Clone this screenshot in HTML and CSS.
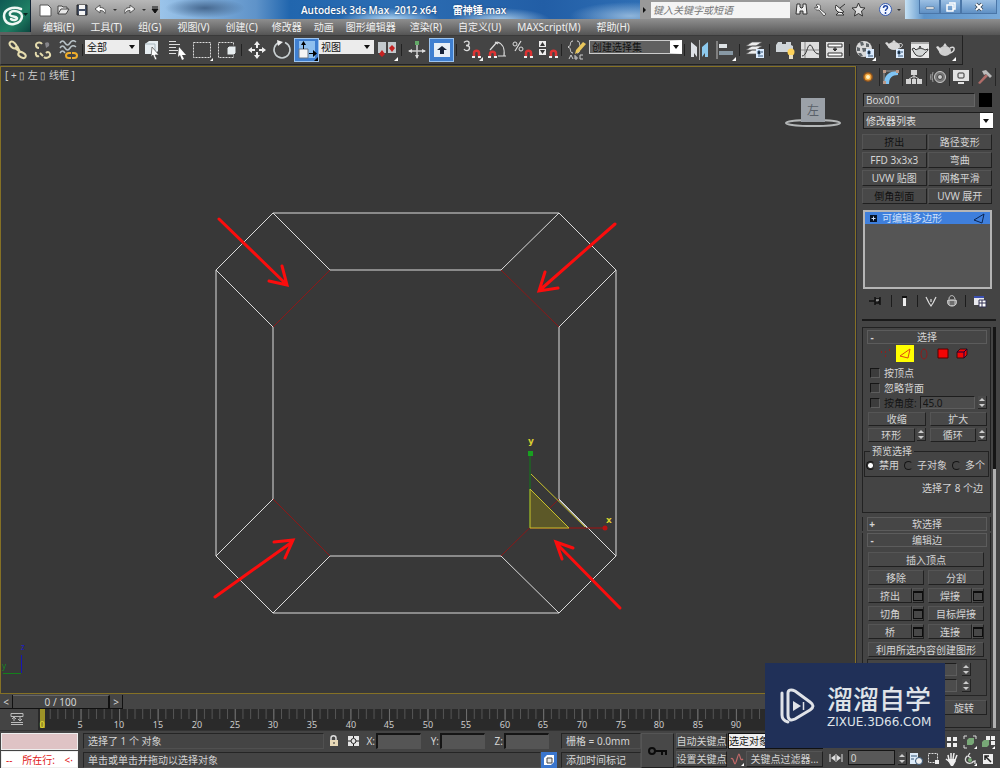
FILE: index.html
```html
<!DOCTYPE html>
<html lang="zh-CN">
<head>
<meta charset="utf-8">
<title>Autodesk 3ds Max 2012 x64</title>
<link rel="stylesheet" href="styles.css">
</head>
<body>
<header class="top">
  <button class="logo" aria-label="应用程序菜单">
    <svg width="31" height="32" viewBox="0 0 31 32"><g fill="none" stroke="#eef7f3" stroke-linecap="round"><path d="M21 9C13 6 4 9 4 16c0 6 5 9 10 8 5-1 8-4 8-8 0-3-4-5-8-5-3 0-5 2-4 4 1 2 6 1 7 3 0 2-4 3-6 1" stroke-width="2.500"/></g><path d="M23 13h5l-2.500 3z" fill="#0a2522"/></svg>
  </button>
  <div class="bars">
    <div class="title-row">
      <div class="quick">
        <button aria-label="新建"><svg width="15" height="14"><path d="M2 2h8l3 3v8H2z" fill="#fff" stroke="#555"/></svg></button>
        <button aria-label="打开"><svg width="15" height="14"><path d="M2 11V3h4l1 1h4v2M2 11l3-5h8l-3 5z" fill="#e7e7e7" stroke="#444"/></svg></button>
        <button aria-label="保存"><svg width="15" height="14"><path d="M2 2h10v10H2z" fill="#455066" stroke="#222"/><path d="M4 2h6v4H4zM4 8h6v4H4z" fill="#f5f5f5"/></svg></button>
        <button aria-label="撤消"><svg width="15" height="14"><path d="M2 6l5-4v2.500c5 0 6 3 5 6-1-2-2-3-5-3V10z" fill="#fff" stroke="#555"/></svg></button>
        <button class="drop" aria-label="撤消列表"><svg width="8" height="8"><path d="M2 3h4L4 5z" fill="#333"/></svg></button>
        <button aria-label="重做"><svg width="15" height="14"><path d="M13 6L8 2v2.500c-5 0-6 3-5 6 1-2 2-3 5-3V10z" fill="#eee" stroke="#555"/></svg></button>
        <button class="drop" aria-label="重做列表"><svg width="8" height="8"><path d="M2 3h4L4 5z" fill="#333"/></svg></button>
        <button class="drop" aria-label="自定义工具栏"><svg width="8" height="8"><path d="M1 1h6M1 3h6L4 7z" fill="#111" stroke="#111"/></svg></button>
      </div>
      <h1 class="title"><span>Autodesk 3ds Max&nbsp; 2012 x64</span><span>雷神锤.max</span></h1>
      <div class="search"><svg width="7" height="10"><path d="M2 2l3 3-3 3z" fill="#111"/></svg><input type="text" placeholder="键入关键字或短语" aria-label="搜索"></div>
      <div class="help">
        <button aria-label="查找"><svg width="15" height="15"><path d="M3 2h3v3l1 1h1l1-1V2h3l1 10H9V9H6v3H2z" fill="#eee" stroke="#333"/></svg></button>
        <button aria-label="速博应用中心"><svg width="15" height="15"><path d="M3 3c2-2 6 0 4 4l6 5-2 2-5-6C3 9 1 6 2 5l2 1 1-1z" fill="#f2f2f2" stroke="#555"/></svg></button>
        <button aria-label="通讯中心"><svg width="15" height="15"><path d="M4 3c-2 5 2 9 8 7zM7 10l-3 3h8l-3-3M8 6l5-4" fill="#eee" stroke="#333"/></svg></button>
        <button aria-label="收藏夹"><svg width="15" height="15"><path d="M7.500 1l2 4.500 4.500.5-3.500 3 1 5-4-2.500-4 2.500 1-5L1 6l4.500-.5z" fill="#ddd" stroke="#333"/></svg></button>
        <button class="help-btn" aria-label="帮助"><svg width="15" height="15"><circle cx="7.500" cy="7.500" r="6" fill="#f2f6ff" stroke="#3a5db0"/><path d="M5.500 6c0-3 4-3 4-.5 0 2-2 1.500-2 3.500M7.500 10v2" fill="none" stroke="#2346a0" stroke-width="1.500"/></svg></button>
        <button class="drop" aria-label="帮助列表"><svg width="8" height="8"><path d="M2 3h4L4 5z" fill="#333"/></svg></button>
      </div>
      <div class="window-buttons">
        <button aria-label="最小化"><svg width="14" height="12"><path d="M3 6h8v2H3z" fill="#fff" stroke="#456" stroke-width=".5"/></svg></button>
        <button aria-label="还原"><svg width="14" height="12"><path d="M5 2h6v6H9M3 4h6v6H3z" fill="none" stroke="#fff" stroke-width="1.500"/></svg></button>
        <button class="close" aria-label="关闭"><svg width="14" height="12"><path d="M4 3l6 6M10 3l-6 6" stroke="#345" stroke-width="3.500"/><path d="M4 3l6 6M10 3l-6 6" stroke="#fff" stroke-width="2"/></svg></button>
      </div>
    </div>
    <nav class="menu">
      <button>编辑(E)</button><button>工具(T)</button><button>组(G)</button><button>视图(V)</button><button>创建(C)</button><button class="plain">修改器</button><button class="plain">动画</button><button class="plain">图形编辑器</button><button>渲染(R)</button><button>自定义(U)</button><button>MAXScript(M)</button><button>帮助(H)</button>
    </nav>
  </div>
</header>

<div class="toolbar">
  <div class="tools">
    <button aria-label="选择并链接"><svg width="22" height="22"><g fill="none" stroke="#e5dcae" stroke-width="2"><ellipse cx="6" cy="6" rx="4" ry="2.500" transform="rotate(45 6 6)"/><ellipse cx="15" cy="16" rx="4" ry="2.500" transform="rotate(30 15 16)"/><path d="M8 9l5 4M10 7l3 6"/></g></svg></button>
    <button aria-label="断开链接"><svg width="22" height="22"><g fill="none" stroke="#e5dcae" stroke-width="2"><path d="M10 5c-2-3-6-1-6 1s1 3 3 3M12 18c2 2 7 0 6-3s-3-2-4-1M8 14l3 3M4 13c-1 3 1 5 3 4"/></g><path d="M13 4c3-2 5 0 4 3l-3 2z" fill="#85858a"/></svg></button>
    <button aria-label="绑定到空间扭曲"><svg width="22" height="22"><g fill="none"><path d="M3 4q2.500-4 5 0t5 0 6-1M3 9q2.500-4 5 0t5 0 6-1M3 14q2.500-4 5 0" stroke="#b9c3c8" stroke-width="1.500"/><path d="M15 14h2c4 0 4 5 0 5h-2M14 14h-2c-4 0-4 5 0 5h2" stroke="#efad2b" stroke-width="2"/></g></svg></button>
    <i class="sep"></i>
    <label class="pick filter"><select aria-label="选择过滤器"><option>全部</option></select></label>
    <button aria-label="选择对象"><svg width="22" height="22"><path d="M4 5l4-3h9v10l-3 3H4z" fill="#e6edf1"/><path d="M4 5h10v10" stroke="#a9b8bf" fill="none"/><path d="M11 8l7 8h-4l2 4-2 1-2-5-2 2z" fill="#fff" stroke="#444" stroke-width=".7"/></svg></button>
    <button aria-label="按名称选择"><svg width="22" height="22"><path d="M3 2.500h7M3 5.500h11M3 8.500h7M3 11.500h9M3 14.500h7" stroke="#ddd"/><path d="M13 8l7 8h-4l2 4-2 1-2-5-2 2z" fill="#fff"/></svg></button>
    <button aria-label="矩形选择区域"><svg width="22" height="22"><path d="M2.500 3.500h17v15h-17z" fill="none" stroke="#ddd" stroke-dasharray="2 1"/><path d="M22 19v3h-3z" fill="#fff"/></svg></button>
    <button aria-label="窗口/交叉"><svg width="22" height="22"><path d="M2.500 3.500h15v15h-15z" fill="none" stroke="#ddd" stroke-dasharray="2 1"/><path d="M11 9l2-2h7v7l-2 2h-7z" fill="#e8eef0" stroke="#444"/></svg></button>
    <i class="sep"></i>
    <button aria-label="选择并移动"><svg width="22" height="22"><path d="M11 2l3 4h-2v3h-2V6H8zM11 20l3-4h-2v-3h-2v3H8zM2 11l4-3v2h3v2H6v2zM20 11l-4-3v2h-3v2h3v2z" fill="#eee"/></svg></button>
    <button aria-label="选择并旋转"><svg width="22" height="22"><path d="M14 3.500A8 8 0 1 1 8 3.500" fill="none" stroke="#c9d0d2" stroke-width="1.500"/><path d="M6 1l6 2-5 4z" fill="#eee"/></svg></button>
    <button class="active" aria-label="选择并缩放"><svg width="22" height="22"><path d="M3 2h16v17H3z" fill="#8fc0ef"/><path d="M3 10h9v9H3z" fill="#f4f4f4" stroke="#678"/><path d="M7.500 10V5M13 14.500h5" stroke="#000"/><path d="M5 6l2.500-4L10 6zM17 11l4 3.500-4 3.500zM22 18v4h-4z" fill="#000"/></svg></button>
    <label class="pick coord"><select aria-label="参考坐标系"><option>视图</option></select></label>
    <button aria-label="使用轴点中心"><svg width="22" height="22"><path d="M2 3h8v11H2zM12 3h8v11h-8z" fill="#c3c9cd"/><path d="M3 15l3-4 3 4-3 3zM13 9l3-3 3 3-3 4z" fill="#c52222"/><path d="M22 18v4h-4z" fill="#fff"/></svg></button>
    <i class="sep"></i>
    <button aria-label="选择并操纵"><svg width="22" height="22"><path d="M11 3v16M3 12h16" stroke="#ccc" stroke-width="1.500"/><path d="M9 2h4v4H9z" fill="#62a867"/><path d="M2 12l4-2v4zM20 12l-4-2v4zM11 20l-2-4h4z" fill="#ddd"/></svg></button>
    <button class="active" aria-label="键盘快捷键覆盖切换"><svg width="22" height="22"><path d="M3 4h16v14H3z" fill="#e6eef6"/><path d="M11 7l5 4h-3v4H9v-4H6z" fill="#172338"/></svg></button>
    <i class="sep"></i>
    <button aria-label="捕捉开关"><svg width="22" height="22"><path d="M3 3.500C5 1 8.500 2 8 4.500c0 1.500-1.500 2-3 2 2 0 3.500 1 3.500 2.500C8.500 12 4.500 12.500 3 10" fill="none" stroke="#ddd" stroke-width="1.300"/><path d="M13 18v-4c0-3 5-3 5 0v4" fill="none" stroke="#d33" stroke-width="2.500"/><path d="M11 17h3v2h-3zM17 17h3v2h-3zM22 18v4h-4z" fill="#eee"/></svg></button>
    <button aria-label="角度捕捉切换"><svg width="22" height="22"><path d="M4 11l7-8M11 3c5 1 8 6 7 14M12 17h8M9 3l3 2" fill="none" stroke="#ddd" stroke-width="1.200"/><path d="M4 18v-3c0-3 5-3 5 0v3" fill="none" stroke="#d33" stroke-width="2.500"/><path d="M2 17h3v2H2zM8 17h3v2H8z" fill="#eee"/></svg></button>
    <button aria-label="百分比捕捉切换"><svg width="22" height="22"><path d="M10 2L4 12" stroke="#ddd" stroke-width="1.200"/><circle cx="4" cy="5" r="2" fill="none" stroke="#ddd"/><circle cx="10" cy="10" r="2" fill="none" stroke="#ddd"/><path d="M15 18v-4c0-3 5-3 5 0v4" fill="none" stroke="#d33" stroke-width="2.500"/><path d="M13 17h3v2h-3zM19 17h3v2h-3z" fill="#eee"/></svg></button>
    <button aria-label="微调器捕捉切换"><svg width="22" height="22"><path d="M3 2h7v6H3zM3 10h7v6H3z" fill="#eee"/><path d="M4 7l2.500-4L9 7zM4 11l2.500 4L9 11z" fill="#333"/><path d="M15 18v-4c0-3 5-3 5 0v4" fill="none" stroke="#d33" stroke-width="2.500"/><path d="M13 17h3v2h-3zM19 17h3v2h-3z" fill="#eee"/></svg></button>
    <i class="sep"></i>
    <button aria-label="编辑命名选择集"><svg width="22" height="22"><path d="M7 2C3 2 6 7 2 8c4 1 1 6 5 6M11 2c4 0 1 5 5 6-4 1-1 6-5 6" fill="none" stroke="#ddd"/><path d="M17 3l3 2-7 8-4 2 1-4z" fill="#eac75b"/><path d="M3 20l2-4 2 4M9 16v4h2v-2H9M17 16h-3v4h3" fill="none" stroke="#ccc"/></svg></button>
    <label class="pick sets"><select aria-label="命名选择集"><option>创建选择集</option></select></label>
    <i class="sep"></i>
    <button aria-label="镜像"><svg width="22" height="22"><path d="M2 3l6 5v10l-3-4v4H2z" fill="#dde1e6"/><path d="M10.500 1v20" stroke="#aaa"/><path d="M19 3l-6 5v10l3-4v4h3z" fill="#8cc9ed"/></svg></button>
    <button aria-label="对齐"><svg width="22" height="22"><path d="M3 2v18" stroke="#bbb"/><path d="M5 5h8v4H5z" fill="#dde2e5"/><path d="M5 12h14v4H5z" fill="#8899a5"/><path d="M22 18v4h-4z" fill="#fff"/></svg></button>
    <i class="sep"></i>
    <button aria-label="层管理器"><svg width="22" height="22"><path d="M2 7l6-4h10l-6 4zM2 11l6-4h10l-6 4zM2 15l6-4h10l-6 4z" fill="#eee" stroke="#555" stroke-width=".7"/><path d="M12 10h8v9h-8z" fill="#dcecff"/><path d="M14 12h2v3h-2zM17 13h2M14 17h5" stroke="#357"/></svg></button>
    <i class="sep"></i>
    <button aria-label="石墨建模工具"><svg width="22" height="22"><path d="M2 6l2-3h4v2h4V3h5v3l2 1v6H2z" fill="#cfd5d9"/><circle cx="17" cy="13" r="3.500" fill="#ffd35a"/><path d="M15 16h4v4h-4z" fill="#e9dfc3"/></svg></button>
    <button aria-label="曲线编辑器"><svg width="22" height="22"><path d="M2 3h18v16H2z" fill="#dedede"/><path d="M6 3v16M2 11h18" stroke="#888"/><path d="M3 17C8 17 8 6 11 6s3 9 9 9" fill="none" stroke="#333"/></svg></button>
    <button aria-label="图解视图"><svg width="22" height="22"><path d="M2 3h18v16H2z" fill="#dedede"/><path d="M4 5h14v3H4zM4 14h14v3H4z" fill="#fff" stroke="#333"/><path d="M11 8v3M9 10h4l-2 2z" stroke="#333" fill="#333"/></svg></button>
    <i class="sep"></i>
    <button aria-label="材质编辑器"><svg width="22" height="22"><circle cx="10" cy="10" r="8" fill="#d9d9d9"/><path d="M6 3l3 0 1 3-3 1zM12 4l3 1 0 3-3 0zM3 8l3 1 0 3-3 0zM8 9l4 0 1 3-4 1zM4 14l3 0 2 3-3 0z" fill="#60666a"/><path d="M12 10h8v9h-8z" fill="#dcecff"/><path d="M14 12h2v3h-2zM14 17h5" stroke="#357"/><path d="M22 18v4h-4z" fill="#fff"/></svg></button>
    <i class="sep"></i>
    <button aria-label="渲染设置"><svg width="22" height="22"><ellipse cx="10" cy="7" rx="6" ry="4" fill="#d8d8d8"/><path d="M5 9L1 4l2-1 4 4zM8 3l2-2 2 2z" fill="#d8d8d8"/><path d="M15 5c4-2 5 3 0 4" fill="none" stroke="#d8d8d8"/><path d="M12 10h8v9h-8z" fill="#dcecff"/><path d="M14 12h2v3h-2zM17 13h2M14 17h5" stroke="#357"/></svg></button>
    <button aria-label="渲染帧窗口"><svg width="22" height="22"><path d="M2 3h18v16H2z" fill="#e8e8e8"/><path d="M2 4h18" stroke="#aaa" stroke-width="2"/><path d="M6 15L3 10l2-1 2 2c2-2 7-2 9 0l3-1c0 3-3 3-4 5-1 3-7 3-9 0zM10 9l1-2 1 2" fill="#d4d7d7" stroke="#333"/></svg></button>
    <button aria-label="渲染产品"><svg width="22" height="22"><ellipse cx="11" cy="12" rx="6" ry="5" fill="#cfcfcf"/><path d="M6 14L2 8l2-1 4 4zM9 7l2-3 2 3z" fill="#d8d8d8"/><path d="M16 9c5-3 6 3 0 5" fill="none" stroke="#d8d8d8" stroke-width="1.500"/><path d="M22 18v4h-4z" fill="#fff"/></svg></button>
  </div>
</div>

<main class="work">
  <section class="stage">
    <div class="viewport">
      <svg class="scene" viewBox="0 66 856 628" preserveAspectRatio="xMidYMid meet">
        <g class="mesh">
          <path d="M273 213H559L616 270V556L559 613H273L216 556V270z"/>
          <path d="M330 270H501M559 327V499M501 556H330M273 499V327"/>
          <path d="M273 213l57 57M559 213l-58 57M616 270l-57 57M616 556l-57-57M559 613l-58-57M273 613l57-57M216 556l57-57M216 270l57 57"/>
        </g>
        <path class="picked" d="M330 270l-57 57M501 270l58 57M273 499l57 57M501 556l58-57"/>
        <g class="gizmo">
          <path d="M530 528V454" stroke="#117a18"/><path d="M528 451h5v5h-5z" fill="#18a020"/>
          <path d="M530 528h76" stroke="#a01010"/><circle cx="605" cy="528" r="2.500" fill="#b81212"/>
          <path d="M530 489v39h39z" fill="#5c5828" stroke="#c9c12c"/>
          <path d="M531 474l54 53" stroke="#c9c12c"/><path d="M559 500l28 28" stroke="#aaa"/>
          <text x="528" y="444">y</text><text x="606" y="523">x</text>
        </g>
        <g class="arrows">
          <path d="M219 219L286 284M269 281l18 4-5-19"/>
          <path d="M615 224L540 290M545 272l-6 19 19-3"/>
          <path d="M215 597L292 542M274 542l19-2-8 18"/>
          <path d="M620 608L557 544M562 559l-6-17 17 6"/>
        </g>
        <g class="cube"><ellipse cx="813" cy="123" rx="27" ry="3" fill="none" stroke="#b4b7b8" stroke-width="2"/><path d="M801 98h24v24h-24z" fill="#9ba1a8"/><text x="807" y="115">左</text></g>
        <path d="M21.500 673V655" stroke="#1616b4"/><path d="M3 673.500h18" stroke="#14801c"/>
        <g class="axis"><text x="21" y="650" fill="#1c1ccc">z</text><text x="2" y="669" fill="#168a20">y</text></g>
      </svg>
      <span class="view-label">[ + ▯ 左 ▯ 线框 ]</span>
    </div>
    <div class="slider"><button aria-label="上一帧">&lt;</button><button class="thumb">0 / 100</button><button aria-label="下一帧">&gt;</button></div>
    <div class="track">
      <button class="mini-curve" aria-label="打开迷你曲线编辑器"><svg width="16" height="15"><path d="M2 1.500h12v3H2zM2 12.500h12M2 10.500h12M5 5v4M11 5v4M3 7l2-2 2 2M9 7l2 2 2-2" fill="none" stroke="#bbb"/></svg></button>
      <div class="ruler">
        <svg width="817" height="21">
          <defs><pattern id="minor" x="4" width="7.710" height="21" patternUnits="userSpaceOnUse"><path d="M.5 0v10" stroke="#555"/></pattern><pattern id="major" x="4" width="38.550" height="21" patternUnits="userSpaceOnUse"><path d="M.5 0v13" stroke="#6c6c6c"/></pattern></defs>
          <path d="M4 0h775v21H4z" fill="url(#minor)"/><path d="M4 0h775v21H4z" fill="url(#major)"/>
          <path d="M2 0h5v19H2z" fill="#9c9227"/>
          <g class="nums"><text x="4" y="19" class="now">0</text><text x="42" y="19">5</text><text x="81" y="19">10</text><text x="120" y="19">15</text><text x="159" y="19">20</text><text x="197" y="19">25</text><text x="235" y="19">30</text><text x="274" y="19">35</text><text x="313" y="19">40</text><text x="351" y="19">45</text><text x="390" y="19">50</text><text x="428" y="19">55</text><text x="467" y="19">60</text><text x="505" y="19">65</text><text x="544" y="19">70</text><text x="583" y="19">75</text><text x="621" y="19">80</text><text x="660" y="19">85</text><text x="698" y="19">90</text></g>
        </svg>
      </div>
    </div>
  </section>

  <aside class="panel">
    <div class="tabs">
      <button aria-label="创建"><svg width="18" height="16"><circle cx="9" cy="8" r="5" fill="#8a5220"/><circle cx="9" cy="8" r="3.500" fill="#f2a63c"/><circle cx="9" cy="8" r="2" fill="#fff3c0"/></svg></button>
      <button class="on" aria-label="修改"><svg width="18" height="16"><path d="M2 15C2 6 7 2 16 2v4C10 6 7 9 7 15z" fill="#7fc4f4"/><path d="M2 14V2h13" fill="none" stroke="#999"/><path d="M1 1h3v3H1zM14 1h3v3h-3zM1 12h3v3H1z" fill="#b98"/></svg></button>
      <button aria-label="层次"><svg width="18" height="16"><path d="M6 1h6v5H6zM1 10h5v5H1zM7 10h4v5H7zM12 10h5v5h-5z" fill="#d4d4d4"/><path d="M9 6v4M4 10l5-3 5 3" fill="none" stroke="#ccc"/></svg></button>
      <button aria-label="运动"><svg width="18" height="16"><circle cx="11" cy="8" r="5.500" fill="#777" stroke="#ccc"/><circle cx="11" cy="8" r="2.500" fill="#ccc" stroke="#444"/><path d="M4 3q-2 5 0 10M2 5q-1 3 0 6" fill="none" stroke="#999"/></svg></button>
      <button aria-label="显示"><svg width="18" height="16"><path d="M1 1h16v11H1zM6 13h6v2H6z" fill="#e2e2e2"/><rect x="6" y="4" width="6" height="5" rx="1" fill="none" stroke="#333"/></svg></button>
      <button aria-label="工具"><svg width="18" height="16"><path d="M3 14l8-9 2 2-8 8z" fill="#b06c68"/><path d="M7 2l4-1 6 6-2 2-4-4-2 1z" fill="#bbb"/></svg></button>
    </div>
    <div class="name-row"><input type="text" value="Box001" aria-label="对象名称"><button class="swatch" aria-label="对象颜色"></button></div>
    <label class="pick modlist"><select aria-label="修改器列表"><option>修改器列表</option></select></label>
    <div class="mod-buttons">
      <button disabled>挤出</button><button>路径变形</button>
      <button>FFD 3x3x3</button><button>弯曲</button>
      <button>UVW 贴图</button><button>网格平滑</button>
      <button disabled>倒角剖面</button><button>UVW 展开</button>
    </div>
    <div class="stack">
      <button class="stack-item"><svg width="9" height="9"><path d="M1 1h7v7H1z" fill="#061226"/><path d="M2.500 4.500h4M4.500 2.500v4" stroke="#c7dcfa"/></svg><span>可编辑多边形</span><svg width="13" height="11"><path d="M1 7l10-6-2 9z" fill="none" stroke="#0b2552"/></svg></button>
    </div>
    <div class="stack-tools">
      <button aria-label="锁定堆栈"><svg width="16" height="14"><path d="M1 7h6M7 3v8M7 5h4v4H7M12 3v8" fill="none" stroke="#111" stroke-width="1.500"/><path d="M8 6h3" stroke="#ddd"/></svg></button><i></i>
      <button aria-label="显示最终结果"><svg width="12" height="14"><path d="M4 2h5v2H4z" fill="#111"/><path d="M5 4h3v8H5z" fill="#eee"/></svg></button><i></i>
      <button aria-label="使唯一"><svg width="14" height="14"><path d="M2 3l3 6M12 3L9 9M7 5v3M5 9l2 3 2-3" fill="none" stroke="#ddd" stroke-width="1.200"/></svg></button>
      <button aria-label="移除修改器"><svg width="14" height="14"><path d="M4 5c0-4 5-5 6 0" fill="none" stroke="#ccc"/><path d="M3 6h8c1 3 0 6-4 6s-5-3-4-6z" fill="#999" stroke="#ddd"/><path d="M5 8h4M5 10h4" stroke="#444"/></svg></button><i></i>
      <button aria-label="配置修改器集"><svg width="14" height="14"><path d="M1 2h10v9H1z" fill="#e9e9ee"/><path d="M1 2h10v2H1z" fill="#3a4fb0"/><path d="M6 6h7v7H6z" fill="#fff" stroke="#335"/><path d="M6 9h7M9 6v7" stroke="#335"/></svg></button>
    </div>
    <div class="rollouts">
      <div class="roll-col">
        <section class="roll select-roll">
          <button class="roll-head"><b>-</b><span>选择</span></button>
          <div class="sub">
            <button aria-label="顶点"><svg width="18" height="17"><path d="M4 7h1M8 11h1M12 5h1M8 7h1" stroke="#a11" stroke-width="1.500"/></svg></button>
            <button class="cur" aria-label="边"><svg width="18" height="17"><path d="M4 11l10-7-2 9z" fill="none" stroke="#e04a10"/></svg></button>
            <button aria-label="边界"><svg width="18" height="17"><ellipse cx="9" cy="9" rx="3" ry="5" fill="none" stroke="#8c1c1c"/></svg></button>
            <button aria-label="多边形"><svg width="18" height="17"><path d="M4 4h10v9H4z" fill="#f20505" stroke="#500"/></svg></button>
            <button aria-label="元素"><svg width="18" height="17"><path d="M4 7l3-3h7v6l-3 3H4z" fill="#f20505" stroke="#311"/><path d="M4 7h7v6M11 7l3-3" fill="none" stroke="#104"/></svg></button>
          </div>
          <label class="check"><input type="checkbox">按顶点</label>
          <label class="check"><input type="checkbox">忽略背面</label>
          <div class="angle"><label class="check off"><input type="checkbox" disabled>按角度:</label><input class="num" type="text" value="45.0" disabled aria-label="角度"><span class="spin"></span></div>
          <div class="two"><button>收缩</button><button>扩大</button></div>
          <div class="two"><div class="with"><button>环形</button><span class="spin"></span></div><div class="with"><button>循环</button><span class="spin"></span></div></div>
          <fieldset><legend>预览选择</legend>
            <label><input type="radio" name="preview" checked>禁用</label><label><input type="radio" name="preview">子对象</label><label><input type="radio" name="preview">多个</label>
          </fieldset>
          <p class="count">选择了 8 个边</p>
        </section>
        <section class="roll soft"><button class="roll-head"><b>+</b><span>软选择</span></button></section>
        <section class="roll edges">
          <button class="roll-head"><b>-</b><span>编辑边</span></button>
          <div class="edge-grid">
            <button class="full">插入顶点</button>
            <button>移除</button><button>分割</button>
            <div class="with"><button>挤出</button><button class="opt" aria-label="挤出设置"></button></div><div class="with"><button>焊接</button><button class="opt" aria-label="焊接设置"></button></div>
            <div class="with"><button>切角</button><button class="opt" aria-label="切角设置"></button></div><button>目标焊接</button>
            <div class="with"><button>桥</button><button class="opt" aria-label="桥设置"></button></div><div class="with"><button>连接</button><button class="opt" aria-label="连接设置"></button></div>
            <button class="full">利用所选内容创建图形</button>
          </div>
          <div class="weights"><div><input class="num" type="text" aria-label="权重"><span class="spin"></span></div><div><input class="num" type="text" aria-label="折缝"><span class="spin"></span></div></div>
          <div class="turn"><button>旋转</button></div>
        </section>
      </div>
      <div class="scroll"><i></i></div>
    </div>
  </aside>
</main>

<footer class="status">
  <div class="listener"><div class="pink"></div><div class="line"><span>--</span><span>所在行:</span><span>&lt;·</span></div></div>
  <div class="info">
    <div class="row">
      <div class="well grow">选择了 1 个 对象</div>
      <button class="lock" aria-label="选择锁定"><svg width="12" height="14"><path d="M3 7V4c0-3 5-3 5 0v3" fill="none" stroke="#ddd" stroke-width="1.500"/><path d="M2 6h8v6H2z" fill="#e8d9b8"/><path d="M6 8v2" stroke="#333"/></svg></button>
      <button class="abs" aria-label="绝对模式"><svg width="12" height="12"><path d="M0 1h11v10H0z" fill="#e6e6e6"/><circle cx="5.500" cy="6" r="2.500" fill="none" stroke="#222"/><path d="M5.500 1v2M5.500 9v2M0 6h3M8 6h3" stroke="#222"/></svg></button>
      <label class="xyz">X:<input type="text"></label><label class="xyz">Y:<input type="text"></label><label class="xyz">Z:<input type="text"></label>
      <div class="well tag">栅格 = 0.0mm</div>
    </div>
    <div class="row">
      <div class="well grow">单击或单击并拖动以选择对象</div>
      <button class="adapt" aria-label="自适应降级"><svg width="16" height="16"><path d="M3 6l3-3h7v7l-3 3H3z" fill="#fff"/><path d="M6 6h5v5H6z" fill="#e8e8e8" stroke="#444"/></svg></button>
      <div class="well tag">添加时间标记</div>
    </div>
  </div>
  <button class="key" aria-label="设置关键点"><svg width="22" height="12"><circle cx="5" cy="6" r="3" fill="none" stroke="#0b0b0b" stroke-width="2"/><path d="M8 5h12v5h-2V7h-2v3h-2V7H8z" fill="#0b0b0b"/></svg></button>
  <div class="keys">
    <button>自动关键点</button><label class="keysel"><select aria-label="关键点集"><option>选定对象</option></select></label>
    <button>设置关键点</button><div class="filters"><button class="tangent" aria-label="新建关键点切线"><svg width="16" height="16"><path d="M2 8c2-3 3 5 4 5S9 3 10 3s1 8 4 5" fill="none" stroke="#c26a6a" stroke-width="1.200"/><path d="M15 12v3h-3z" fill="#fff"/></svg></button><button>关键点过滤器...</button></div>
  </div>
  <div class="play">
    <button aria-label="关键点模式"><svg width="14" height="12"><path d="M1 2v8M13 2v8M7 2v8" stroke="#ddd"/><path d="M6 3v6L2 6zM8 3v6l4-3z" fill="#ddd"/></svg></button><input type="text" value="0" aria-label="当前帧"><span class="spin"></span>
  </div>
  <div class="nav">
    <i></i><i></i>
    <button aria-label="缩放所有视图"><svg width="14" height="14"><path d="M2 2h4v4H2zM8 2h4v4H8zM2 8h4v4H2zM8 8h4v4H8z" fill="#eee"/></svg></button>
    <button aria-label="最大化显示"><svg width="14" height="14"><path d="M1 4V1h3M10 1h3v3M1 10v3h3" fill="none" stroke="#ddd"/><path d="M4 5l2-2h5v5l-2 2H4z" fill="#78a877"/><path d="M14 11v3h-3z" fill="#fff"/></svg></button>
    <button aria-label="所有视图最大化"><svg width="14" height="14"><path d="M5 1h4v4H5zM10 1h4v4h-4zM10 6h4v4h-4z" fill="#eee"/><path d="M1 7l2-2h5v5l-2 2H1z" fill="#78a877"/><path d="M14 11v3h-3z" fill="#fff"/></svg></button>
    <button aria-label="时间配置"><svg width="14" height="14"><path d="M1 1h8v11H1z" fill="#dbeaf8"/><path d="M2 4h6M2 7h3" stroke="#357"/><circle cx="10" cy="9" r="3.500" fill="#eee" stroke="#357"/></svg></button>
    <button aria-label="缩放区域"><svg width="14" height="14"><path d="M1.500 1.500h9v9h-9z" fill="none" stroke="#ddd" stroke-dasharray="2 1"/><path d="M8 8h4v4H8z" fill="#eee"/></svg></button>
    <button aria-label="平移视图"><svg width="14" height="14"><path d="M4 8L3 3M6 7V1M8 7l1-6M10 8l2-5M5 10L1 7" stroke="#eee" stroke-width="1.500"/><path d="M4 7h6l1 2-3 5H6L3 9z" fill="#eee"/></svg></button>
    <button aria-label="环绕"><svg width="14" height="14"><path d="M7 1L5 4l3 2M4 4c-5 6 3 10 7 5M9 10l3-1v3" fill="none" stroke="#ddd" stroke-width="1.300"/><circle cx="7" cy="8" r="2" fill="#78a877"/><path d="M14 11v3h-3z" fill="#fff"/></svg></button>
    <button aria-label="最大化视口切换"><svg width="14" height="14"><path d="M2 2h10v10H2z" fill="#eee"/><path d="M4 8V4h4M4 4l6 6" fill="none" stroke="#222" stroke-width="1.500"/></svg></button>
  </div>
</footer>

<div class="watermark">
  <svg width="36" height="38" viewBox="0 0 36 38"><g fill="none" stroke="#e0e3e8" stroke-width="3" stroke-linecap="round" stroke-linejoin="round"><path d="M9 6v22c0 5 3 6 7 4l15-9c4-3 4-5 0-8L16 4c-4-2-7-1-7 2"/><path d="M3 6v22c0 4 2 6 6 7"/></g><path d="M14 14l8 5-8 5z" fill="#e0e3e8"/><path d="M24.500 15v8" stroke="#e0e3e8" stroke-width="1.500"/></svg>
  <div><strong>溜溜自学</strong><span>ZIXUE.3D66.COM</span></div>
</div>
</body>
</html>
```
FILE: styles.css
```css
* { box-sizing: border-box; }
body {
  margin: 0; min-height: 100vh; display: flex; flex-direction: column;
  background: #444; color: #d4d4d4; overflow: hidden; position: relative;
  font: 10px/12px "Noto Sans", "Noto Sans CJK SC", sans-serif;
}
button, input, select { font: inherit; color: inherit; margin: 0; padding: 0; border: 0; border-radius: 0; background: none; min-width: 0; }
button { display: flex; align-items: center; justify-content: center; white-space: nowrap; }
svg { display: block; flex: none; }

/* title and menus */
.top { display: flex; height: 35px; background: #606060; }
.logo { width: 31px; height: 32px; background: linear-gradient(135deg, #0f5a54, #1f8064 60%, #0c4740); border-right: 1px solid #123; }
.bars { flex: 1; min-width: 0; }
.title-row { display: flex; height: 19px; background: #6f9ccc; }
.quick { display: flex; align-items: center; width: 129px; padding-left: 5px; background: linear-gradient(#b8b8b8, #8d8d8d); }
.quick button { width: 19px; }
.quick .drop { width: 11px; }
.title {
  flex: 1; margin: 0; display: flex; gap: 16px; padding-left: 141px; align-items: center; white-space: nowrap;
  font: 600 10px/12px "Open Sans", "Noto Sans CJK SC", sans-serif; color: #fff; text-shadow: 0 0 2px #1c3d68;
  background:
    radial-gradient(ellipse 50px 12px at 230px 20px, #b4d8f4 0, #b4d8f400 100%),
    radial-gradient(ellipse 40px 10px at 45px 8px, #46688f 0, #46688f00 100%),
    radial-gradient(ellipse 50px 12px at 340px 20px, #a9cbe8 0, #a9cbe800 100%),
    radial-gradient(ellipse 60px 14px at 470px 16px, #8fb5da 0, #8fb5da00 100%),
    linear-gradient(90deg, #9bc4ea 0, #5f93c9 20%, #2166ae 27%, #2c6db3 50%, #225ea6 80%, #2e6eb4);
}
.search { display: flex; align-items: center; width: 150px; padding-left: 1px; background: #999; }
.search input { flex: 1; width: 0; height: 16px; margin-left: 3px; padding: 0 2px; background: #f4f4f4; color: #555; font-style: italic; }
.search input::placeholder { color: #777; opacity: 1; }
.help { display: flex; align-items: center; width: 115px; padding-left: 2px; background: linear-gradient(#b5b5b5, #8b8b8b); }
.help button { width: 19px; }
.help .help-btn { margin-left: 8px; }
.help .drop { width: 8px; }
.window-buttons { display: flex; align-items: flex-start; width: 95px; padding-left: 14px; background: linear-gradient(90deg, #c6e2f5, #5c93c9 20%, #79aada); }
.window-buttons button { width: 21px; height: 14px; border: 1px solid #4a76a8; border-top: 0; background: linear-gradient(#9cc0e4, #5f90c4); }
.window-buttons .close { width: 36px; }
.menu { display: flex; height: 16px; padding-left: 4px; background: linear-gradient(#8e8e8e, #555); color: #f0f0f0; }
.menu button { padding: 0 8px; }
.menu .plain { padding: 0 6px; }

/* main toolbar */
.toolbar { display: flex; height: 31px; background: #444; }
.tools { display: flex; align-items: center; height: 30px; padding: 0 5px 0 4px; border: 1px solid #222; border-top-color: #3a3a3a; border-left-color: #555; }
.tools button { width: 25px; height: 24px; }
.tools .active { background: #3f7fd0; border: 1px solid #9cc4f0; }
.sep { width: 5px; height: 12px; border-left: 1px solid #222; margin-left: 2px; margin-right: -2px; }
.pick { position: relative; display: block; height: 14px; margin-bottom: 6px; background: #ececec; color: #111; }
.pick select { appearance: none; width: 100%; height: 100%; padding: 0 2px; display: block; }
.pick::after { content: ""; position: absolute; right: 4px; top: calc(50% - 2px); border: 3px solid transparent; border-top: 4px solid #111; border-bottom: 0; pointer-events: none; }
.filter { width: 54px; }
.coord { width: 55px; }
.sets { width: 93px; background: #606060; border: 1px solid #ccc; border-right: 12px solid #fff; }
.sets::after { right: -9px; }

/* viewport and time line */
.work { flex: 1; display: flex; min-height: 0; }
.stage { flex: 1; min-width: 0; display: flex; flex-direction: column; }
.viewport { flex: 1; min-height: 0; position: relative; background: #383838; box-shadow: inset 0 0 0 1px #857125; }
.scene { width: 100%; height: 100%; }
.view-label { position: absolute; left: 5px; top: 3px; color: #d0d0d0; }
.mesh path { fill: none; stroke: #dcdcdc; }
.picked { fill: none; stroke: #8c1818; }
.gizmo { fill: none; }
.gizmo text { fill: #d8cf30; font: 700 9px "DejaVu Sans", sans-serif; }
.arrows path { fill: none; stroke: #fb0d0d; stroke-width: 3; stroke-linecap: round; }
.cube text { fill: #596069; font-size: 12px; }
.axis text { font-size: 8px; }
.slider { display: flex; height: 15px; padding-top: 1px; background: #454545; }
.slider button { width: 13px; border-right: 1px solid #111; border-bottom: 1px solid #111; }
.slider .thumb { width: 97px; border-top: 1px solid #666; border-right-width: 2px; }
.track { display: flex; height: 21px; background: #444; }
.mini-curve { width: 38px; padding-right: 5px; }
.ruler { flex: 1; min-width: 0; overflow: hidden; background: #2a2a2a; }
.nums text { fill: #ccc; text-anchor: middle; font-size: 9px; }
.nums .now { fill: #e7dc35; }

/* command panel */
.panel { width: 144px; padding: 2px 4px 0 6px; display: flex; flex-direction: column; border-left: 1px solid #2c2c38; }
.tabs { display: flex; height: 18px; margin: 0 0 0 -6px; }
.tabs button { flex: 1; border-right: 1px solid #252525; }
.name-row { display: flex; gap: 4px; margin-top: 7px; padding-right: 4px; }
.name-row input { flex: 1; width: 0; height: 14px; padding: 0 2px; background: #555; border: 1px solid #1c1c1c; border-right-color: #666; border-bottom-color: #666; }
.swatch { width: 13px; height: 14px; background: #000; }
.modlist { height: 17px; margin: 5px 3px 0 0; background: #555; color: #ddd; border: 1px solid #1c1c1c; border-right: 0; }
.modlist::before { content: ""; position: absolute; right: 0; top: 0; width: 13px; height: 15px; background: #fff; pointer-events: none; }
.mod-buttons { display: grid; grid-template-columns: 1fr 1fr; grid-auto-rows: 16px; gap: 2px 1px; margin: 5px 4px 0 -1px; }
.mod-buttons button, .two button, .edge-grid button, .turn button, .keys button, .play > button, .key {
  background: #484848; border: 1px solid #555; border-right-color: #202020; border-bottom-color: #202020;
}
button:disabled { color: #111; }
.stack { height: 79px; margin: 6px 4px 0 0; background: #555; border: 2px solid #b5b5b5; }
.stack-item { width: 100%; height: 12px; padding: 0 4px; gap: 4px; background: #3f7fdc; color: #cde0fb; }
.stack-item span { flex: 1; text-align: left; }
.stack-tools { display: flex; align-items: center; justify-content: space-between; height: 14px; margin: 5px 9px 0 5px; }
.stack-tools i { width: 1px; height: 12px; background: #1c1c1c; }
.rollouts { flex: 1; min-height: 0; display: flex; gap: 2px; margin: 11px 0 2px -1px; padding-top: 6px; border-top: 2px solid #1a1a1a; }
.roll-col { flex: 1; min-width: 0; display: flex; flex-direction: column; }
.scroll { width: 3px; padding-top: 142px; background: #151515; display: flex; }
.scroll i { flex: 1; background: #b0b0b0; }
.roll { border: 1px solid #222; padding: 2px 3px 0 4px; }
.roll-head { width: 100%; height: 14px; border: 1px solid #5c5c5c; background: #464646; }
.roll-head b { width: 8px; }
.roll-head span { flex: 1; padding-right: 8px; }
.select-roll { height: 186px; }
.sub { display: flex; gap: 1px; margin: 1px 0 3px 10px; }
.sub .cur { background: #ffff00; }
.check { display: flex; align-items: center; gap: 4px; height: 15px; padding-left: 3px; white-space: nowrap; }
.off { color: #151515; }
input[type=checkbox] { appearance: none; width: 10px; height: 10px; background: #3c3c3c; border: 1px solid #151515; border-right-color: #5d5d5d; border-bottom-color: #5d5d5d; }
.angle { display: flex; align-items: center; gap: 3px; }
.num { height: 13px; width: 54px; padding: 0 2px; color: #151515; background: #4c4c4c; border: 1px solid #1d1d1d; border-right-color: #5d5d5d; border-bottom-color: #5d5d5d; }
.angle .num { flex: 1; width: 0; }
.spin { position: relative; width: 9px; height: 13px; flex: none; background: #4a4a4a; border-right: 1px solid #222; border-bottom: 1px solid #222; }
.spin::before, .spin::after { content: ""; position: absolute; left: 1px; border: 3px solid transparent; }
.spin::before { top: 2px; border-bottom: 3px solid #ccc; border-top: 0; }
.spin::after { bottom: 1px; border-top: 3px solid #ccc; border-bottom: 0; }
.two { display: grid; grid-template-columns: 1fr 1fr; gap: 4px; margin: 2px 0 2px 1px; }
.two button { height: 14px; }
.with { display: flex; gap: 2px; }
.with button { flex: 1; }
fieldset { display: flex; justify-content: space-between; min-width: 0; height: 32px; margin: 3px -2px 0 -3px; padding: 1px 3px 0 1px; border: 1px solid #222; }
legend { margin-left: 4px; padding: 0 2px; line-height: 12px; height: 12px; }
fieldset label { display: flex; align-items: center; gap: 4px; height: 14px; white-space: nowrap; }
input[type=radio] { appearance: none; width: 9px; height: 9px; border: 1px solid #151515; border-right-color: #444; border-radius: 50%; }
input[type=radio]:checked { background: radial-gradient(circle, #fff 2px, #333 3px); }
.count { margin: 5px 4px 0; text-align: right; }
.soft { border-top: 0; border-bottom: 0; padding-top: 0; margin-top: 4px; }
.edges { flex: 1; padding-top: 0; margin-top: 2px; border-top: 0; }
.edge-grid { display: grid; grid-template-columns: 1fr 1fr; grid-auto-rows: 15px; gap: 3px 4px; margin: 5px 3px 0 1px; }
.edge-grid .full { grid-column: 1 / 3; }
.edge-grid .with { gap: 0; }
.edge-grid .opt { flex: none; width: 12px; }
.opt::before { content: ""; width: 8px; height: 7px; border: 1px solid #0d0d0d; border-top-width: 2px; }
.weights { display: grid; justify-items: end; align-content: start; gap: 3px; height: 37px; margin: 2px 0 0; padding: 3px 15px 0 0; border: 1px solid #252525; }
.weights div { display: flex; gap: 5px; }
.turn { display: flex; justify-content: flex-end; margin: 4px 0 0; }
.turn button { width: 46px; height: 15px; }

/* status bar */
.status { display: flex; height: 38px; padding-top: 2px; background: #444; border-top: 1px solid #333; }
.listener { width: 77px; margin-left: 1px; display: flex; flex-direction: column; gap: 1px; }
.listener > div { flex: 1; border: 1px solid #eee; }
.pink { background: #dfc3c5; }
.line { display: flex; justify-content: space-between; align-items: center; padding: 0 4px; background: #fff; color: #e01818; }
.info { flex: 1; min-width: 0; display: flex; flex-direction: column; gap: 3px; margin-left: 5px; }
.row { display: flex; height: 16px; align-items: center; }
.well { height: 16px; padding: 1px 4px; border: 1px solid #252525; border-right-color: #505050; border-bottom-color: #505050; white-space: nowrap; overflow: hidden; }
.grow { flex: 1; min-width: 0; }
.tag { width: 80px; margin-left: 4px; }
.lock, .abs { width: 20px; }
.xyz { display: flex; align-items: center; justify-content: flex-end; width: 64px; gap: 1px; }
.row .xyz:first-of-type { width: 57px; }
.xyz input { width: 45px; height: 16px; background: #555; border: 2px solid #151515; border-right: 1px solid #555; border-bottom: 1px solid #555; }
.row .xyz + .tag { margin-left: 12px; }
.adapt { width: 16px; height: 16px; background: #3b76cd; }
.key { width: 33px; }
.keys { display: grid; grid-template-columns: 51px 1fr; grid-template-rows: 16px 16px; gap: 2px 1px; width: 147px; margin-left: 2px; }
.keysel { background: #eee; color: #111; border: 1px solid #111; }
.keysel select { appearance: none; width: 100%; display: block; height: 14px; }
.filters { display: flex; }
.filters .tangent { width: 18px; background: none; border: 0; }
.filters button:last-child { flex: 1; }
.play { display: flex; align-items: flex-end; gap: 3px; width: 84px; padding: 0 0 3px 4px; }
.play > button { width: 18px; height: 14px; background: none; border: 0; }
.play input { width: 48px; height: 15px; padding: 0 2px; background: #585858; border: 1px solid #151515; }
.nav { display: grid; grid-template-columns: repeat(5, 18px); grid-template-rows: 17px 17px; width: 93px; }

.watermark { position: absolute; right: 55px; bottom: 20px; width: 180px; height: 85px; display: flex; align-items: center; gap: 12px; padding-left: 14px; background: #203058; color: #dfe3e8; }
.watermark div { display: flex; flex-direction: column; }
.watermark strong { font-size: 26px; line-height: 32px; font-weight: 500; }
.watermark span { font: 12px/14px "DejaVu Sans", sans-serif; }
```
